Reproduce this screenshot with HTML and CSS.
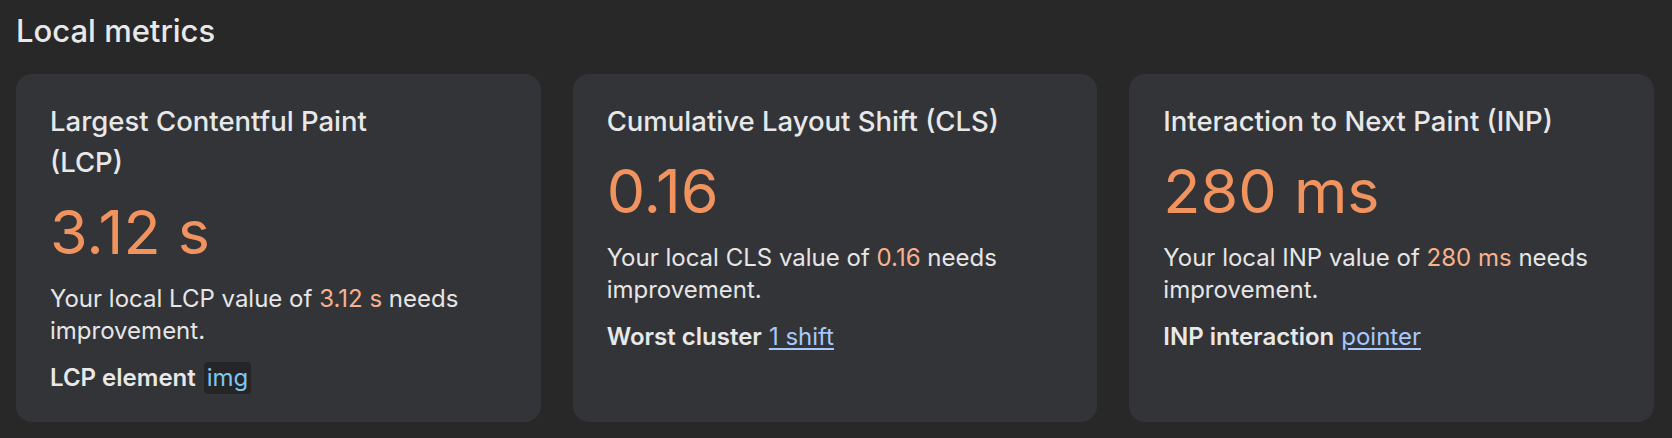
FILE: index.html
```html
<!DOCTYPE html>
<html lang="en">
<head>
    <meta charset="UTF-8">
    <meta name="viewport" content="width=device-width, initial-scale=1.0">
    <title>Local metrics</title>
    <link rel="stylesheet" href="styles.css">
</head>
<body>

    <div class="container">
        <h1>Local metrics</h1>

        <div class="metric-cards">
            <!-- LCP -->
            <div class="metric-card">
                <h2 class="metric-title">Largest Contentful Paint<br>(LCP)</h2>
                <div class="metric-value">3.12 s</div>
                <p class="metric-text">Your local LCP value of <span class="value-inline">3.12 s</span> needs improvement.</p>
                <div class="metric-detail">
                    <span class="detail-label">LCP element</span>
                    <span class="node-chip">img</span>
                </div>
            </div>

            <!-- CLS -->
            <div class="metric-card">
                <h2 class="metric-title">Cumulative Layout Shift (CLS)</h2>
                <div class="metric-value">0.16</div>
                <p class="metric-text">Your local CLS value of <span class="value-inline">0.16</span> needs improvement.</p>
                <div class="metric-detail">
                    <span class="detail-label">Worst cluster</span>
                    <a href="#" class="detail-link">1 shift</a>
                </div>
            </div>

            <!-- INP -->
            <div class="metric-card">
                <h2 class="metric-title">Interaction to Next Paint (INP)</h2>
                <div class="metric-value">280 ms</div>
                <p class="metric-text">Your local INP value of <span class="value-inline">280 ms</span> needs improvement.</p>
                <div class="metric-detail">
                    <span class="detail-label">INP interaction</span>
                    <a href="#" class="detail-link">pointer</a>
                </div>
            </div>
        </div>
    </div>

</body>
</html>
```

FILE: styles.css
```css
* {
    margin: 0;
    padding: 0;
    box-sizing: border-box;
    font-family: Inter, "Noto Sans", sans-serif;
}

body {
    background-color: #282828;
    color: #e6e6e6;
}

.container {
    padding: 13px 18px 16px 16px;
}

h1 {
    font-size: 31px;
    font-weight: 500;
    line-height: 36px;
    color: #e8e8e8;
    margin-bottom: 25px;
}

.metric-cards {
    display: grid;
    grid-template-columns: repeat(3, 1fr);
    gap: 32px;
}

.metric-card {
    background-color: #333438;
    border-radius: 16px;
    padding: 27px 34px 0 34px;
    height: 348px;
}

.metric-title {
    font-size: 27.5px;
    font-weight: 500;
    line-height: 41px;
    color: #e8e8e8;
}

.metric-value {
    font-size: 61px;
    line-height: 72px;
    color: #f0935f;
    margin-top: 13px;
}

.metric-text {
    font-size: 24px;
    line-height: 31.5px;
    margin-top: 15px;
}

.value-inline {
    color: #f7b28d;
}

.metric-detail {
    display: flex;
    align-items: center;
    gap: 7px;
    font-size: 24px;
    line-height: 31.5px;
    margin-top: 16px;
}

.detail-label {
    font-weight: 600;
    color: #e8e8e8;
}

.node-chip {
    background-color: #252527;
    color: #7cc7f2;
    border-radius: 4px;
    padding: 0 3px;
    margin-left: 1px;
    line-height: 32px;
}

.detail-link {
    color: #a8c7fa;
    text-decoration: underline;
    text-underline-offset: 3px;
}
```
